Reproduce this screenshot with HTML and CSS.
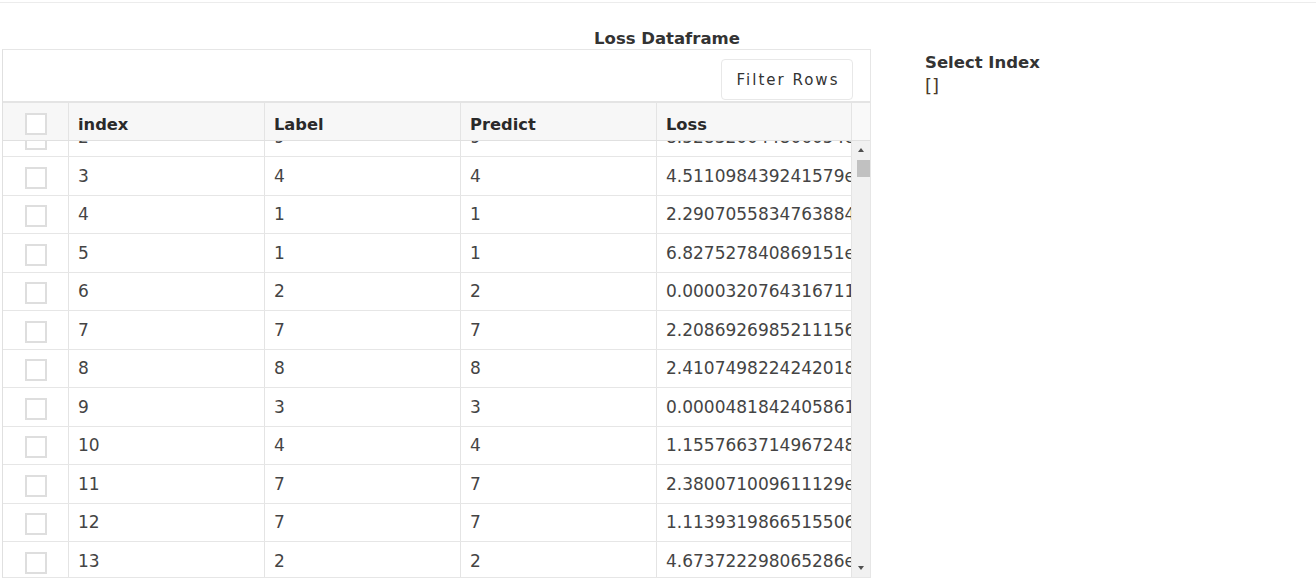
FILE: index.html
```html
<!DOCTYPE html>
<html>
<head>
<meta charset="utf-8">
<link rel="stylesheet" href="styles.css">
</head>
<body>
<div class="topline"></div>
<h1 class="title">Loss Dataframe</h1>
<div class="main">
  <div class="grid">
    <div class="toolbar">
      <button class="filter-btn">Filter Rows</button>
    </div>
    <div class="head">
      <div class="cell cb"><span class="box"></span></div>
      <div class="cell col">index</div>
      <div class="cell col">Label</div>
      <div class="cell col">Predict</div>
      <div class="cell col last">Loss</div>
      <div class="cell spacer"></div>
    </div>
    <div class="bodywrap">
      <div class="viewport">
        <div class="rows">
          <div class="row"><div class="cell cb"><span class="box"></span></div><div class="cell col">2</div><div class="cell col">9</div><div class="cell col">9</div><div class="cell col last">8.528320044806054e-06</div></div>
          <div class="row"><div class="cell cb"><span class="box"></span></div><div class="cell col">3</div><div class="cell col">4</div><div class="cell col">4</div><div class="cell col last">4.511098439241579e-05</div></div>
          <div class="row"><div class="cell cb"><span class="box"></span></div><div class="cell col">4</div><div class="cell col">1</div><div class="cell col">1</div><div class="cell col last">2.2907055834763884e-05</div></div>
          <div class="row"><div class="cell cb"><span class="box"></span></div><div class="cell col">5</div><div class="cell col">1</div><div class="cell col">1</div><div class="cell col last">6.827527840869151e-06</div></div>
          <div class="row"><div class="cell cb"><span class="box"></span></div><div class="cell col">6</div><div class="cell col">2</div><div class="cell col">2</div><div class="cell col last">0.00003207643167115748</div></div>
          <div class="row"><div class="cell cb"><span class="box"></span></div><div class="cell col">7</div><div class="cell col">7</div><div class="cell col">7</div><div class="cell col last">2.2086926985211156e-05</div></div>
          <div class="row"><div class="cell cb"><span class="box"></span></div><div class="cell col">8</div><div class="cell col">8</div><div class="cell col">8</div><div class="cell col last">2.4107498224242018e-05</div></div>
          <div class="row"><div class="cell cb"><span class="box"></span></div><div class="cell col">9</div><div class="cell col">3</div><div class="cell col">3</div><div class="cell col last">0.000048184240586123</div></div>
          <div class="row"><div class="cell cb"><span class="box"></span></div><div class="cell col">10</div><div class="cell col">4</div><div class="cell col">4</div><div class="cell col last">1.1557663714967248e-05</div></div>
          <div class="row"><div class="cell cb"><span class="box"></span></div><div class="cell col">11</div><div class="cell col">7</div><div class="cell col">7</div><div class="cell col last">2.380071009611129e-05</div></div>
          <div class="row"><div class="cell cb"><span class="box"></span></div><div class="cell col">12</div><div class="cell col">7</div><div class="cell col">7</div><div class="cell col last">1.1139319866515506e-05</div></div>
          <div class="row"><div class="cell cb"><span class="box"></span></div><div class="cell col">13</div><div class="cell col">2</div><div class="cell col">2</div><div class="cell col last">4.673722298065286e-06</div></div>
        </div>
      </div>
      <div class="scrollbar">
        <div class="arrow up"></div>
        <div class="track"><div class="thumb"></div></div>
        <div class="arrow down"></div>
      </div>
    </div>
  </div>
  <div class="side">
    <div class="side-title">Select Index</div>
    <div class="side-value">[]</div>
  </div>
</div>
</body>
</html>
```
FILE: styles.css
```css
html, body {
  margin: 0;
  padding: 0;
  background: #fff;
}
body {
  font-family: "DejaVu Sans", Verdana, sans-serif;
  color: #333;
  width: 1316px;
  height: 585px;
  overflow: hidden;
}
.topline {
  height: 1px;
  margin-top: 2px;
  background: #ececec;
}
.title {
  margin: 0;
  padding: 26px 0 0 18px;
  height: 20px;
  line-height: 20px;
  font-size: 16.5px;
  font-weight: bold;
  text-align: center;
  color: #333;
}
.main {
  display: flex;
  align-items: flex-start;
  padding-left: 2px;
}
.grid {
  width: 869px;
  box-sizing: border-box;
  border: 1px solid #e6e6e6;
  border-left-color: #e0e0e0;
  flex: none;
}
.toolbar {
  height: 51px;
  display: flex;
  justify-content: flex-end;
  align-items: flex-start;
  padding-right: 17px;
  border-bottom: 2px solid #e4e4e4;
}
.filter-btn {
  margin-top: 9px;
  height: 41px;
  width: 132px;
  background: #fff;
  border: 1px solid #e8e8e8;
  border-radius: 4px;
  font-family: "DejaVu Sans", Verdana, sans-serif;
  font-size: 15px;
  letter-spacing: 2px;
  color: #333;
  padding: 0 0 0 2px;
}
.head {
  display: flex;
  height: 38px;
  box-sizing: border-box;
  background: #f7f7f7;
  border-bottom: 1px solid #e0e0e0;
}
.cell {
  box-sizing: border-box;
  flex: none;
  border-right: 1px solid #e4e4e4;
  display: flex;
  align-items: center;
  overflow: hidden;
  white-space: nowrap;
}
.head .cell {
  font-weight: bold;
  font-size: 16.3px;
  color: #2a2a2a;
}
.head .col {
  padding-top: 5px;
}
.cb {
  width: 66px;
  justify-content: center;
}
.col {
  width: 196px;
  padding-left: 9px;
}
.col.last {
  width: 195px;
}
.spacer {
  width: 18px;
  border-right: none;
  background: #f9f9f9;
}
.box {
  display: block;
  width: 22px;
  height: 22px;
  box-sizing: border-box;
  border: 2px solid #dedede;
  background: #fff;
  margin-top: 4px;
}
.bodywrap {
  display: flex;
  height: 436px;
}
.viewport {
  width: 849px;
  height: 436px;
  overflow: hidden;
}
.rows {
  margin-top: -22.5px;
}
.row {
  display: flex;
  height: 38.5px;
  box-sizing: border-box;
  border-bottom: 1px solid #e6e6e6;
  font-size: 17px;
  color: #444;
}
.row .cell {
  height: 100%;
  padding-top: 0;
}
.scrollbar {
  width: 18px;
  background: #f1f1f1;
  display: flex;
  flex-direction: column;
  align-items: center;
}
.arrow {
  width: 0;
  height: 0;
  border-left: 3.5px solid transparent;
  border-right: 3.5px solid transparent;
  flex: none;
}
.arrow.up {
  border-bottom: 4px solid #505050;
  margin-top: 7px;
  margin-bottom: 7px;
}
.arrow.down {
  border-top: 4px solid #505050;
  margin-top: 6px;
  margin-bottom: 7px;
}
.track {
  flex: 1;
  width: 100%;
  padding-top: 1px;
  display: flex;
  justify-content: flex-end;
}
.thumb {
  width: 13px;
  height: 17px;
  background: #c1c1c1;
}
.side {
  margin-left: 54px;
  padding-top: 2px;
  font-size: 16.5px;
}
.side-title {
  font-weight: bold;
  line-height: 24px;
  color: #333;
}
.side-value {
  line-height: 22px;
  font-size: 18px;
  color: #4a3a2a;
}
```
